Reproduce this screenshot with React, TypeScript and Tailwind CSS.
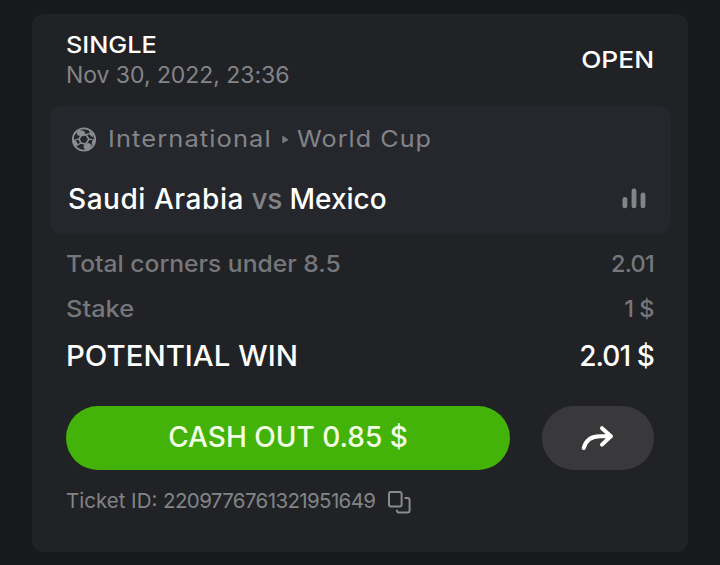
import clsx from 'clsx';

interface RowProps {
  label: string;
  value: string;
  className: string;
  labelClass: string;
  valueClass: string;
}

const BallIcon = () => (
  <svg className="h-[26px] w-[26px] shrink-0 text-[#8c8d91]" viewBox="0 0 26 26" fill="none">
    <circle cx="13" cy="13.5" r="11.2" stroke="currentColor" strokeWidth="1.8" />
    <path
      fill="currentColor"
      d="M8 4 13 5 14.4 7.6 10.4 10.4 6.2 9 5.6 6ZM18.2 4.6 22.6 8.6 22.4 11.6 18.8 9ZM2 13 4.4 14 6.8 17.8 6 21 3 18ZM13.6 18 18 17 20.8 19.2 18.6 22.8 14.4 24.2 12.4 21.2ZM22.8 12.6 23.8 14.8 22.4 18.4 20.5 18.6 21.3 14.8Z"
    />
    <path
      d="M9.8 9.6 15 8.6 17.9 13.2 14.8 18 9.8 17 8.2 13Z"
      stroke="currentColor"
      strokeWidth="1.6"
    />
    <path d="M4.3 13.8 8.2 12.8M9.8 17 6.3 19.2M17.9 13.2 21.5 13.6M15 8.6 18.9 7.6" stroke="currentColor" strokeWidth="1.3" />
  </svg>
);

const Row = ({ label, value, className, labelClass, valueClass }: RowProps) => (
  <div className={clsx('flex items-center justify-between whitespace-nowrap', className)}>
    <span className={clsx('origin-left', labelClass)}>{label}</span>
    <span className={valueClass}>{value}</span>
  </div>
);

export default function App() {
  return (
    <div className="h-[565px] w-[720px] overflow-hidden bg-[#18191d] px-8 pt-[14px] font-['Inter',sans-serif] text-white">
      <div className="h-[538px] rounded-xl bg-[#212225] pt-[17px]">
        <div className="flex items-center justify-between pr-[34px] pl-[34px]">
          <div className="text-[23px] leading-[29px] whitespace-nowrap">
            <div className="origin-left scale-x-[1.1] font-medium">SINGLE</div>
            <div className="pt-px leading-[28px] tracking-[-0.05px] text-[#838488]">Nov 30, 2022, 23:36</div>
          </div>
          <div className="origin-right scale-x-[1.12] text-[23.5px] font-medium">OPEN</div>
        </div>

        <div className="mt-[17px] ml-[18px] h-32 w-[621px] rounded-xl bg-[#26272c] pt-[15px]">
          <div className="flex h-[35px] items-center pl-[21px] text-[23.5px] whitespace-nowrap text-[#838488]">
            <BallIcon />
            <span className="ml-[11px] w-[164px] origin-left scale-x-[1.085] tracking-[1px]">International</span>
            <svg className="mt-px ml-[10px] h-[9px] w-[7px]" viewBox="0 0 7 9">
              <path d="M.8 1.2v6.6L6 4.8z" fill="#77787c" stroke="#77787c" strokeLinejoin="round" />
            </svg>
            <span className="ml-[8px] origin-left scale-x-[1.068] tracking-[1px]">World Cup</span>
          </div>
          <div className="mt-[23px] flex h-10 items-center justify-between pr-[25px] pl-[18px]">
            <div className="text-[28px] font-medium whitespace-nowrap">
              <span className="tracking-[0.55px]">Saudi Arabia</span>{' '}
              <span className="tracking-[-0.3px] text-[#838488]">vs</span> Mexico
            </div>
            <svg className="h-[22px] w-6" viewBox="0 0 24 22" stroke="#838488" strokeWidth="4.8" strokeLinecap="round">
              <path d="M2.9 11.5v6.4M12 2.9v15M21 7v10.9" />
            </svg>
          </div>
        </div>

        <div className="pt-[7px] pr-[34px] pl-[34px]">
          <Row
            label="Total corners under 8.5"
            value="2.01"
            className="h-[45px] text-[23.5px] font-medium text-[#76777b]"
            labelClass="scale-x-[1.048]"
            valueClass="tracking-[-0.7px]"
          />
          <Row
            label="Stake"
            value="1 $"
            className="h-[45px] text-[23.5px] font-medium text-[#76777b]"
            labelClass="scale-x-[1.08]"
            valueClass="tracking-[-0.5px]"
          />
          <Row
            label="POTENTIAL WIN"
            value="2.01 $"
            className="h-[50px] text-[28px] font-medium"
            labelClass="scale-x-[1.05]"
            valueClass="tracking-[-0.9px]"
          />
          <div className="mt-[25px] flex gap-8">
            <button className="h-16 w-[444px] rounded-full bg-[#43b309] text-[28px] font-medium whitespace-nowrap text-[#f4ffe6]">
              <span className="relative -top-px">CASH OUT 0.85 $</span>
            </button>
            <button className="flex h-16 w-28 items-center justify-center rounded-full bg-[#39393b]">
              <svg className="h-8 w-9" viewBox="0 0 36 32" fill="none" stroke="#fff" strokeWidth="4" strokeLinecap="round" strokeLinejoin="round">
                <path d="M3.7 26C6 17.5 12 14.2 20 14.2H31M22 6.2 30.8 14.2 22 22.6" />
              </svg>
            </button>
          </div>
          <div className="mt-[16px] flex h-[30px] items-center text-[20.5px] whitespace-nowrap text-[#838488]">
            <span>
              Ticket ID: <span className="tracking-[-0.63px]">2209776761321951649</span>
            </span>
            <svg className="mt-[2px] ml-[12px] h-6 w-6" viewBox="0 0 24 24" fill="none" stroke="#8a8b8f" strokeWidth="2" strokeLinecap="round">
              <rect x="2" y="2" width="12.6" height="14.4" rx="2" />
              <path d="M18.3 8H20.5Q22.6 8 22.6 10V20.4Q22.6 22.4 20.5 22.4H12Q10 22.4 10 20.4" />
            </svg>
          </div>
        </div>
      </div>
    </div>
  );
}
